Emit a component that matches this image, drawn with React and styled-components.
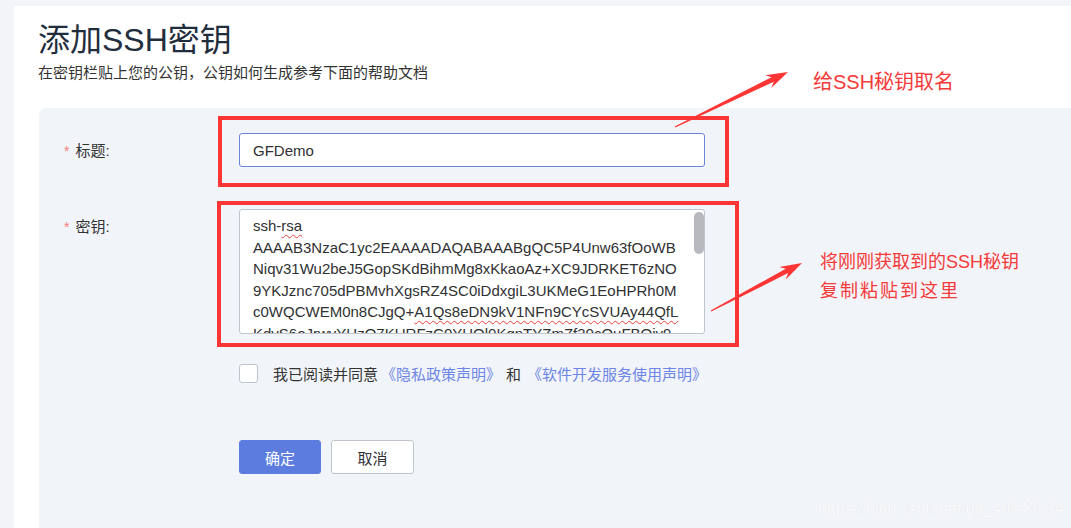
import React from 'react'
import styled, { createGlobalStyle } from 'styled-components'

const GlobalStyle = createGlobalStyle`
    html, body {
        margin: 0;
        padding: 0;
        background: #f2f4f7;
    }
    body {
        font-family: "Liberation Sans", "Noto Sans CJK SC", sans-serif;
        color: #303133;
    }
`

const Page = styled.div`
    position: relative;
    width: 1071px;
    height: 528px;
    overflow: hidden;
    padding: 6px 0 0 14px;
    box-sizing: border-box;
`

const Card = styled.div`
    background: #fff;
    height: 100%;
    width: 1100px;
    padding: 14px 0 0 25px;
    box-sizing: border-box;
    display: flex;
    flex-direction: column;
`

const Title = styled.h1`
    margin: 0 0 0 -1px;
    font-size: 32px;
    line-height: 40px;
    font-weight: 400;
    color: #1f2d3d;
`

const Subtitle = styled.p`
    margin: 3px 0 0 -1px;
    font-size: 15px;
    line-height: 20px;
    color: #333;
`

const Panel = styled.div`
    margin-top: 25px;
    flex: 1;
    background: #f1f4f8;
    border-radius: 8px 0 0 0;
    padding: 25px 0 0 25px;
    display: flex;
    flex-direction: column;
`

const Row = styled.div`
    display: flex;
    align-items: flex-start;
    margin-top: ${props => props.gap || 0}px;
`

const Label = styled.label`
    width: 175px;
    flex-shrink: 0;
    padding-top: 1px;
    font-size: 15px;
    line-height: 34px;
    color: #333;
    &::before {
        content: '*';
        color: #f2807a;
        margin-right: 6px;
        font-size: 14px;
    }
`

const Input = styled.input`
    width: 466px;
    height: 34px;
    box-sizing: border-box;
    border: 1px solid #6d85d8;
    border-radius: 3px;
    padding: 0 13px;
    font-family: inherit;
    font-size: 15px;
    color: #303133;
    outline: none;
    background: #fff;
`

const KeyField = styled.div`
    position: relative;
    width: 466px;
    height: 125px;
`

const KeyBox = styled.div`
    width: 100%;
    height: 100%;
    box-sizing: border-box;
    border: 1px solid #c0c4cc;
    border-radius: 3px;
    background: #fff;
    padding: 5px 14px 0 13px;
    font-size: 15px;
    line-height: 21.5px;
    color: #303133;
    overflow: hidden;
    white-space: nowrap;
`

const Thumb = styled.div`
    position: absolute;
    right: 1px;
    top: 3px;
    width: 10px;
    height: 42px;
    border-radius: 5px;
    background: #b7b9bf;
`

const Typo = styled.span`
    text-decoration: underline wavy #e8403a;
    text-decoration-thickness: 1px;
    text-underline-offset: 3px;
`

const Agree = styled.div`
    display: flex;
    align-items: center;
    margin: 29px 0 0 175px;
    font-size: 15px;
    color: #333;
`

const Box = styled.span`
    width: 19px;
    height: 19px;
    box-sizing: border-box;
    border: 1px solid #bfc3cb;
    border-radius: 3px;
    background: #fff;
    margin-right: 15px;
`

const Link = styled.a`
    color: #6d85e6;
    text-decoration: none;
    margin: 0 5px 0 ${props => props.first ? 3 : 6}px;
`

const Actions = styled.div`
    display: flex;
    gap: 10px;
    margin: 56px 0 0 175px;
`

const Button = styled.button`
    width: ${props => props.primary ? 82 : 83}px;
    height: 34px;
    border-radius: 3px;
    font-family: inherit;
    font-size: 15px;
    cursor: pointer;
    border: 1px solid ${props => props.primary ? '#5c7ddf' : '#c0c4cc'};
    background: ${props => props.primary ? '#5c7ddf' : '#fff'};
    color: ${props => props.primary ? '#fff' : '#303133'};
`

const Overlay = styled.div`
    position: absolute;
    inset: 0;
    pointer-events: none;
`

const Frame = styled.div`
    position: absolute;
    border: 4px solid #fd3535;
    box-sizing: border-box;
`

const Note = styled.div`
    position: absolute;
    color: #f53a3a;
    font-size: ${props => props.size}px;
    line-height: 29px;
`

const Watermark = styled.div`
    position: absolute;
    left: 818px;
    top: 500px;
    font-size: 16px;
    color: #fafbfc;
    text-shadow: 0 0 1px #d9dde3;
`

const arrowPoints = (x1, y1, x2, y2) => {
    const dx = x2 - x1
    const dy = y2 - y1
    const len = Math.hypot(dx, dy)
    const ux = dx / len
    const uy = dy / len
    const nx = -uy
    const ny = ux
    const head = 20
    const bx = x2 - ux * head
    const by = y2 - uy * head
    const pts = [
        [x1 + nx * 0.6, y1 + ny * 0.6],
        [bx + ux * 3 + nx * 2.5, by + uy * 3 + ny * 2.5],
        [bx - ux * 2 + nx * 7, by - uy * 2 + ny * 7],
        [x2, y2],
        [bx - ux * 2 - nx * 7, by - uy * 2 - ny * 7],
        [bx + ux * 3 - nx * 2.5, by + uy * 3 - ny * 2.5],
        [x1 - nx * 0.6, y1 - ny * 0.6],
    ]
    return pts.map(p => p.map(v => v.toFixed(1)).join(',')).join(' ')
}

const Arrows = () => (
    <svg width="1071" height="528" style={{ position: 'absolute', left: 0, top: 0 }}>
        <polygon points={arrowPoints(675, 127, 788, 72)} fill="#fd3535" />
        <polygon points={arrowPoints(711, 311, 802, 263)} fill="#fd3535" />
    </svg>
)

const keyLines = [
    'AAAAB3NzaC1yc2EAAAADAQABAAABgQC5P4Unw63fOoWB',
    'Niqv31Wu2beJ5GopSKdBihmMg8xKkaoAz+XC9JDRKET6zNO',
    '9YKJznc705dPBMvhXgsRZ4SC0iDdxgiL3UKMeG1EoHPRh0M',
]

const App = () => {
    return (
        <Page>
            <GlobalStyle />
            <Card>
                <Title>添加SSH密钥</Title>
                <Subtitle>在密钥栏贴上您的公钥，公钥如何生成参考下面的帮助文档</Subtitle>
                <Panel>
                    <Row>
                        <Label>标题:</Label>
                        <Input defaultValue="GFDemo" />
                    </Row>
                    <Row gap={41}>
                        <Label>密钥:</Label>
                        <KeyField>
                            <KeyBox>
                                <div>ssh-<Typo>rsa</Typo></div>
                                {keyLines.map((line, i) => <div key={`key_${i}`}>{line}</div>)}
                                <div>c0WQCWEM0n8CJgQ+<Typo>A1Qs8eDN9kV1NFn9CYcSVUAy44QfL</Typo></div>
                                <div>KdvS6oJrwvYHzO7KURFzC0YHQl0KqnTYZmZf30cQuFBQiy9</div>
                            </KeyBox>
                            <Thumb />
                        </KeyField>
                    </Row>
                    <Agree>
                        <Box />
                        我已阅读并同意
                        <Link first>《隐私政策声明》</Link>
                        和
                        <Link>《软件开发服务使用声明》</Link>
                    </Agree>
                    <Actions>
                        <Button primary>确定</Button>
                        <Button>取消</Button>
                    </Actions>
                </Panel>
            </Card>
            <Overlay>
                <Frame style={{ left: 218, top: 116, width: 511, height: 71 }} />
                <Frame style={{ left: 217, top: 201, width: 522, height: 146 }} />
                <Arrows />
                <Note size={20} style={{ left: 813, top: 68 }}>给SSH秘钥取名</Note>
                <Note size={18} style={{ left: 820, top: 248 }}>
                    将刚刚获取到的SSH秘钥<br />
                    <span style={{ letterSpacing: '2px' }}>复制粘贴到这里</span>
                </Note>
                <Watermark>https://blog.csdn.net/qq_40542534</Watermark>
            </Overlay>
        </Page>
    )
}

export default App
